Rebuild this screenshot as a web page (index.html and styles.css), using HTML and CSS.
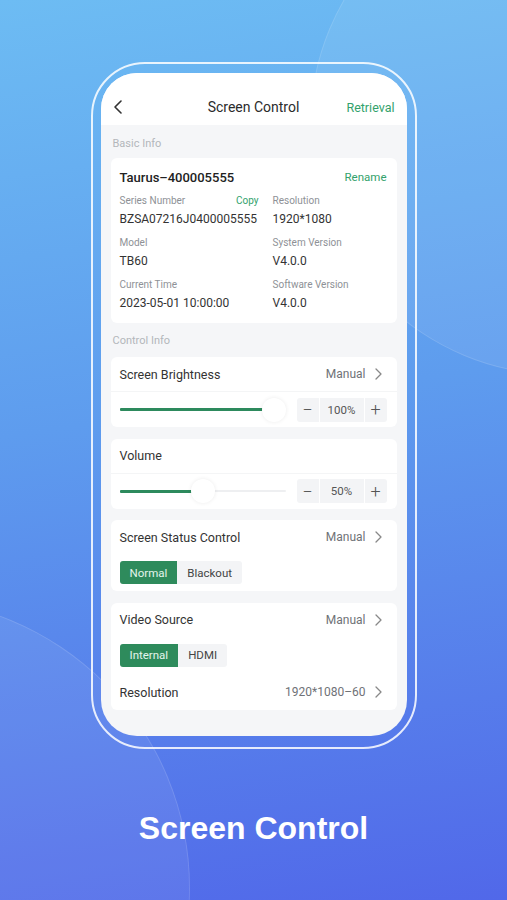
FILE: index.html
```html
<!DOCTYPE html>
<html lang="en">

<head>
    <meta charset="UTF-8">
    <meta name="viewport" content="width=device-width, initial-scale=1.0">
    <title>Screen Control</title>
    <link rel="stylesheet" href="styles.css">
</head>

<body>
    <div class="page">
        <div class="bubble bubble-top"></div>
        <div class="bubble bubble-bottom"></div>

        <div class="frame">
            <div class="screen">
                <!-- Шапка -->
                <div class="topbar">
                    <svg class="back" width="10" height="14" viewBox="0 0 10 14">
                        <polyline points="8,1 2,7 8,13" fill="none" stroke="#333" stroke-width="1.6" stroke-linecap="round" stroke-linejoin="round" />
                    </svg>
                    <h1 class="topbar-title">Screen Control</h1>
                    <span class="link topbar-action">Retrieval</span>
                </div>

                <!-- Основная информация -->
                <div class="section-label">Basic Info</div>
                <div class="card info-card">
                    <div class="info-head">
                        <span class="device-name">Taurus–400005555</span>
                        <span class="link">Rename</span>
                    </div>
                    <div class="info-grid">
                        <div class="field">
                            <div class="field-label field-label-copy">Series Number <span class="link">Copy</span></div>
                            <div class="field-value">BZSA07216J0400005555</div>
                        </div>
                        <div class="field">
                            <div class="field-label">Resolution</div>
                            <div class="field-value">1920*1080</div>
                        </div>
                        <div class="field">
                            <div class="field-label">Model</div>
                            <div class="field-value">TB60</div>
                        </div>
                        <div class="field">
                            <div class="field-label">System Version</div>
                            <div class="field-value">V4.0.0</div>
                        </div>
                        <div class="field">
                            <div class="field-label">Current Time</div>
                            <div class="field-value">2023-05-01 10:00:00</div>
                        </div>
                        <div class="field">
                            <div class="field-label">Software Version</div>
                            <div class="field-value">V4.0.0</div>
                        </div>
                    </div>
                </div>

                <!-- Управление -->
                <div class="section-label section-label-next">Control Info</div>

                <div class="card">
                    <div class="row row-divided">
                        <span class="row-title">Screen Brightness</span>
                        <span class="row-value">Manual
                            <svg class="chevron" width="7" height="12" viewBox="0 0 7 12"><polyline points="1,1 6,6 1,11" fill="none" stroke="#888" stroke-width="1.3" stroke-linecap="round" stroke-linejoin="round" /></svg>
                        </span>
                    </div>
                    <div class="control-row">
                        <div class="slider" style="--p: 1">
                            <div class="slider-track"></div>
                            <div class="slider-fill"></div>
                            <div class="slider-thumb"></div>
                        </div>
                        <div class="stepper">
                            <span class="stepper-btn">−</span>
                            <span class="stepper-value">100%</span>
                            <span class="stepper-btn">+</span>
                        </div>
                    </div>
                </div>

                <div class="card">
                    <div class="row row-divided">
                        <span class="row-title">Volume</span>
                    </div>
                    <div class="control-row">
                        <div class="slider" style="--p: 0.5">
                            <div class="slider-track"></div>
                            <div class="slider-fill"></div>
                            <div class="slider-thumb"></div>
                        </div>
                        <div class="stepper">
                            <span class="stepper-btn">−</span>
                            <span class="stepper-value">50%</span>
                            <span class="stepper-btn">+</span>
                        </div>
                    </div>
                </div>

                <div class="card">
                    <div class="row">
                        <span class="row-title">Screen Status Control</span>
                        <span class="row-value">Manual
                            <svg class="chevron" width="7" height="12" viewBox="0 0 7 12"><polyline points="1,1 6,6 1,11" fill="none" stroke="#888" stroke-width="1.3" stroke-linecap="round" stroke-linejoin="round" /></svg>
                        </span>
                    </div>
                    <div class="segment-row">
                        <div class="segment">
                            <span class="segment-item active">Normal</span>
                            <span class="segment-item">Blackout</span>
                        </div>
                    </div>
                </div>

                <div class="card">
                    <div class="row">
                        <span class="row-title">Video Source</span>
                        <span class="row-value">Manual
                            <svg class="chevron" width="7" height="12" viewBox="0 0 7 12"><polyline points="1,1 6,6 1,11" fill="none" stroke="#888" stroke-width="1.3" stroke-linecap="round" stroke-linejoin="round" /></svg>
                        </span>
                    </div>
                    <div class="segment-row">
                        <div class="segment">
                            <span class="segment-item active">Internal</span>
                            <span class="segment-item">HDMI</span>
                        </div>
                    </div>
                    <div class="row row-last">
                        <span class="row-title">Resolution</span>
                        <span class="row-value">1920*1080–60
                            <svg class="chevron" width="7" height="12" viewBox="0 0 7 12"><polyline points="1,1 6,6 1,11" fill="none" stroke="#888" stroke-width="1.3" stroke-linecap="round" stroke-linejoin="round" /></svg>
                        </span>
                    </div>
                </div>
            </div>
        </div>

        <p class="caption">Screen Control</p>
    </div>
</body>

</html>
```

FILE: styles.css
```css
body {
    margin: 0;
    font-family: Roboto, "Liberation Sans", Arial, sans-serif;
}

.page {
    position: relative;
    height: 900px;
    overflow: hidden;
    padding-top: 62px;
    box-sizing: border-box;
    background: linear-gradient(172deg, #6dbcf3 0%, #5e9cee 45%, #5168e9 100%);
}
/* Декоративные круги */

.bubble {
    position: absolute;
    border-radius: 50%;
    background: rgba(255, 255, 255, 0.07);
    box-shadow: inset 0 0 0 1px rgba(255, 255, 255, 0.12);
}

.bubble-top {
    width: 500px;
    height: 500px;
    left: 310px;
    top: -125px;
}

.bubble-bottom {
    width: 580px;
    height: 580px;
    left: -390px;
    top: 598px;
}
/* Рамка телефона */

.frame {
    position: relative;
    width: 306px;
    margin: 0 auto;
    padding: 9px 8px 11px;
    border: 2px solid rgba(255, 255, 255, 0.85);
    border-radius: 54px;
}

.screen {
    height: 663px;
    border-radius: 36px;
    overflow: hidden;
    background: #f5f6f8;
    color: #333;
}

.topbar {
    height: 52px;
    box-sizing: border-box;
    padding: 0 12px 6px;
    display: grid;
    grid-template-columns: 1fr auto 1fr;
    align-items: end;
    background: #fff;
}

.topbar > * {
    height: 24px;
    display: flex;
    align-items: center;
}

.back {
    width: 10px;
    height: 14px;
    padding: 5px 0;
}

.topbar-title {
    margin: 0;
    font-size: 14px;
    font-weight: 400;
    color: #2b2b2b;
}

.link {
    color: #33a26c;
}

.topbar-action {
    justify-content: flex-end;
    font-size: 12.5px;
}

.section-label {
    padding: 12px 12px 7px;
    font-size: 11px;
    line-height: 14px;
    color: #b3b6bb;
}

.section-label-next {
    padding-top: 0;
    padding-bottom: 9px;
}

.card {
    margin: 0 10px 11.5px;
    background: #fff;
    border-radius: 6px;
}
/* Карточка с информацией */

.info-card {
    margin-bottom: 11px;
    padding: 10px 10px 11px 9px;
}

.info-head {
    display: flex;
    justify-content: space-between;
    align-items: center;
    height: 18px;
}

.device-name {
    font-size: 13px;
    font-weight: 500;
    color: #222;
}

.info-head .link {
    font-size: 11.5px;
}

.info-grid {
    display: grid;
    grid-template-columns: 153px 1fr;
    row-gap: 8px;
    margin-top: 8px;
}

.field-label {
    font-size: 10px;
    line-height: 14px;
    color: #8e9196;
}

.field-label-copy {
    display: flex;
    justify-content: space-between;
    padding-right: 14px;
}

.field-value {
    margin-top: 2px;
    font-size: 12px;
    line-height: 18px;
    color: #333;
}
/* Строки управления */

.row {
    height: 34px;
    padding: 0 15px 0 9px;
    display: flex;
    align-items: center;
    justify-content: space-between;
}

.row-divided {
    border-bottom: 1px solid #f4f5f6;
}

.row-last {
    height: 35px;
    padding-top: 1px;
}

.row-title {
    font-size: 12.5px;
    color: #333;
}

.row-value {
    display: flex;
    align-items: center;
    gap: 9px;
    font-size: 12px;
    color: #6f7277;
}

.control-row {
    height: 35px;
    padding: 0 10px 0 9px;
    display: flex;
    align-items: center;
    gap: 11px;
}

.slider {
    position: relative;
    flex: 1;
    height: 24px;
}

.slider-track,
.slider-fill {
    position: absolute;
    left: 0;
    top: 11px;
    height: 2px;
    border-radius: 1px;
}

.slider-track {
    right: 0;
    background: #eeeff1;
}

.slider-fill {
    top: 10.5px;
    height: 3px;
    width: calc(12px + (100% - 24px) * var(--p));
    background: #2d8a5d;
}

.slider-thumb {
    position: absolute;
    top: 0;
    left: calc((100% - 24px) * var(--p));
    width: 24px;
    height: 24px;
    border-radius: 50%;
    background: #fff;
    box-shadow: 0 0 4px rgba(0, 0, 0, 0.08);
}

.stepper {
    display: flex;
    gap: 1px;
    height: 24px;
    border-radius: 3px;
    overflow: hidden;
}

.stepper > span {
    display: flex;
    align-items: center;
    justify-content: center;
    background: #f3f4f6;
    color: #555;
}

.stepper-btn {
    width: 22px;
    font-size: 18px;
    font-weight: 300;
}

.stepper-value {
    width: 44px;
    font-size: 11.5px;
}

.segment-row {
    padding: 7px 9px;
}

.segment {
    display: inline-flex;
    height: 23px;
    border-radius: 3px;
    overflow: hidden;
    background: #f3f4f6;
}

.segment-item {
    display: flex;
    align-items: center;
    padding: 0 10px;
    font-size: 11.5px;
    color: #444;
}

.segment-item.active {
    background: #2e8b5c;
    color: #e3f5ec;
}

.caption {
    margin: 62px 0 0;
    text-align: center;
    font-family: "Liberation Sans", Arial, sans-serif;
    font-size: 32px;
    line-height: 34px;
    font-weight: 700;
    color: #fff;
}
```
